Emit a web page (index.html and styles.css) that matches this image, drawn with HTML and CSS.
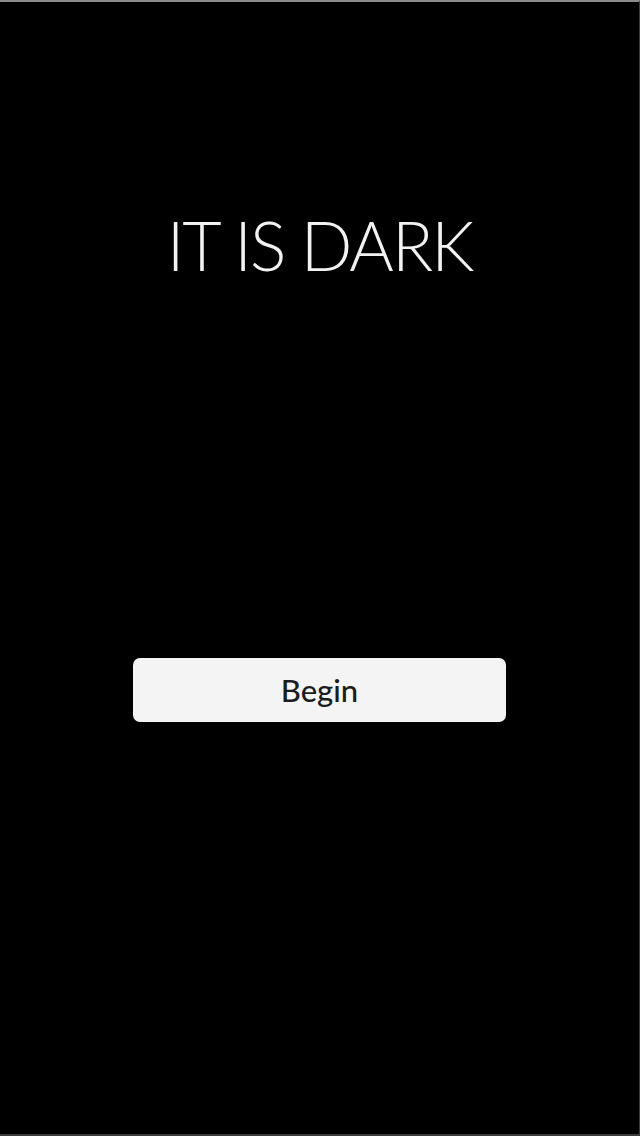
FILE: index.html
```html
<!DOCTYPE html>
<html>
<head>
<meta charset="utf-8">
<link rel="stylesheet" href="styles.css">
</head>
<body>
<main class="screen">
  <h1 class="title">IT IS DARK</h1>
  <button class="begin">Begin</button>
</main>
</body>
</html>
```
FILE: styles.css
```css
html, body {
  margin: 0;
  padding: 0;
  background: #000;
}
.screen {
  box-sizing: border-box;
  width: 640px;
  height: 1136px;
  background: #000;
  border-top: 2px solid #8a8a8a;
  border-right: 1px solid #3a3a3a;
  border-bottom: 2px solid #3a3a3a;
  display: flex;
  flex-direction: column;
  align-items: center;
  font-family: Lato, "Open Sans", sans-serif;
}
.title {
  margin: 204px 0 0 0;
  color: #f2f2f2;
  font-weight: 300;
  font-size: 68px;
  line-height: 78px;
  letter-spacing: -2px;
}
.begin {
  margin-top: 374px;
  width: 373px;
  height: 64px;
  border: none;
  border-radius: 7px;
  background: #f4f4f4;
  color: #1c1c1c;
  font-family: Lato, sans-serif;
  font-weight: 500;
  font-size: 31px;
  padding: 0;
}
```
